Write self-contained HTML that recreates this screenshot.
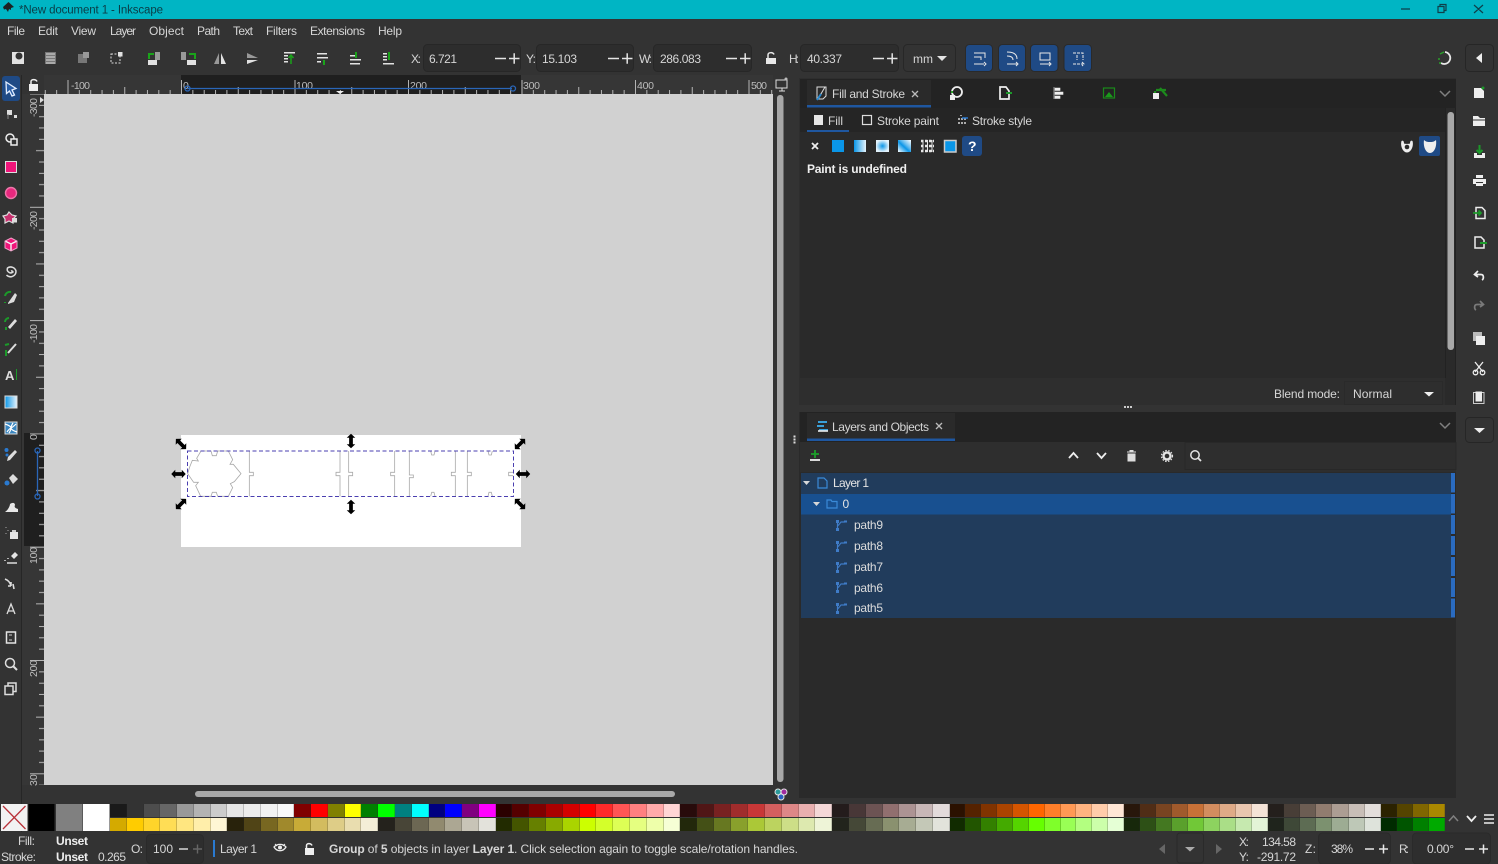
<!DOCTYPE html>
<html><head><meta charset="utf-8"><title>New document 1 - Inkscape</title>
<style>
html,body{margin:0;padding:0;width:1498px;height:864px;overflow:hidden;background:#333}
svg{position:absolute;left:0;top:0}
text{font-family:"Liberation Sans",sans-serif;font-size:12px;fill:#d6d6d6}
.b{font-weight:bold}
.s{font-size:10.5px;fill:#bdbdbd}
#pal{position:absolute;left:110px;top:804px;display:grid;grid-template-rows:13px 13px;row-gap:1px;grid-auto-flow:row;
grid-template-columns:repeat(23,16.766px) repeat(11,16.8px) repeat(9,16.88px) repeat(7,16.77px) repeat(11,15.87px) repeat(9,16px) repeat(7,16.1px) repeat(4,16px)}
#pal i{display:block;box-shadow:inset -1px 0 0 rgba(40,40,40,.22)}
</style></head><body>
<svg width="1498" height="864" viewBox="0 0 1498 864" xmlns="http://www.w3.org/2000/svg">
<defs>
<pattern id="tx" x="67.500" y="74" width="113.500" height="20" patternUnits="userSpaceOnUse">
<path d="M.5 6V20M11.85 16V20M23.2 16V20M34.55 16V20M45.9 16V20M57.25 13V20M68.6 16V20M79.95 16V20M91.3 16V20M102.65 16V20" stroke="#b5b5b5" fill="none"/></pattern>
<pattern id="ty" x="24" y="93.500" width="20" height="113.300" patternUnits="userSpaceOnUse">
<path d="M6 .5H20M15 11.8H20M15 23.2H20M15 34.5H20M15 45.8H20M12 57.2H20M15 68.5H20M15 79.8H20M15 91.1H20M15 102.5H20" stroke="#b5b5b5" fill="none"/></pattern>
<path id="h" d="M-8.500 0L-3.800 -5V-2.200H3.800V-5L8.500 0L3.800 5V2.200H-3.800V5Z" fill="#000"/>
<linearGradient id="g1" x1="0" x2="1"><stop offset="0" stop-color="#0a96e8"/><stop offset="1" stop-color="#e6f4fc"/></linearGradient>
<radialGradient id="g2"><stop offset="0" stop-color="#0a96e8"/><stop offset="1" stop-color="#e2f2fb"/></radialGradient>
<linearGradient id="g3" x1="0" y1="1" x2="1" y2="0"><stop offset="0" stop-color="#fff"/><stop offset=".45" stop-color="#0a96e8"/><stop offset=".6" stop-color="#5cb8ee"/><stop offset="1" stop-color="#fff"/></linearGradient>
<g id="pi"><path d="M1.500 3V11M1.500 7C3 6 4 4 5 3H9" stroke="#3f7cc8" stroke-width="1.200" fill="none"/><rect x="0" y="1" width="3" height="3" fill="#3f7cc8"/><rect x="0" y="9" width="3" height="3" fill="#3f7cc8"/><rect x="8" y="1.500" width="3" height="2" fill="#3f7cc8"/></g>
<g id="mp"><path d="M0 0H11M14 0H24.500M19.200 -5.200V5.200" stroke="#e4e4e4" stroke-width="1.500" fill="none"/></g>
</defs>

<!-- base -->
<rect width="1498" height="864" fill="#333"/>
<rect width="1498" height="19" fill="#00b5c4"/>
<path d="M3 7L8.500 2L14 7L11 8V10L9 9L8 12L6 9L4 9.500Z" fill="#1c2224"/>
<text x="19" y="13.500" textLength="144" style="font-size:11.500px;fill:#0a3c46">*New document 1 - Inkscape</text>
<path d="M1401 9H1410M1438 6.500V12.500H1444V6.500ZM1440 6.500V4.500H1446V10.500H1444M1474 5L1483 13M1483 5L1474 13" stroke="#0e3f4a" stroke-width="1.200" fill="none"/>

<!-- menu -->
<text x="7" y="35" textLength="18">File</text><text x="38" y="35" textLength="20">Edit</text><text x="71" y="35" textLength="25">View</text><text x="110" y="35" textLength="26">Layer</text><text x="149" y="35" textLength="35">Object</text><text x="197" y="35" textLength="23">Path</text><text x="233" y="35" textLength="20">Text</text><text x="266" y="35" textLength="31">Filters</text><text x="310" y="35" textLength="55">Extensions</text><text x="378" y="35" textLength="24">Help</text>

<!-- command toolbar icons -->
<g fill="#e2e2e2">
<rect x="12" y="52" width="12" height="12"/><circle cx="19" cy="56" r="3.500" fill="#333"/>
<rect x="45" y="52" width="11" height="12" fill="#777"/><path d="M46 54H55M46 57H55M46 60H55M46 63H55" stroke="#ddd" fill="none"/>
<rect x="78" y="54" width="9" height="9" fill="#777"/><rect x="83" y="52" width="6" height="6" fill="#999"/>
<path d="M111 54H120V63H111Z" fill="none" stroke="#ddd" stroke-dasharray="2 1.500"/><rect x="118" y="52" width="4.500" height="4.500"/>
<rect x="148" y="60" width="9" height="5"/><rect x="155" y="52" width="5" height="8" fill="#999"/><path d="M149 59V54H154" stroke="#1aa31a" stroke-width="2" fill="none"/>
<rect x="187" y="60" width="9" height="5"/><rect x="181" y="52" width="5" height="8" fill="#999"/><path d="M195 59V54H189" stroke="#1aa31a" stroke-width="2" fill="none"/>
<path d="M219 53L214 64H219Z" fill="#999"/><path d="M221 53L226 64H221Z"/>
<path d="M247 53L258 58L247 58Z" fill="#999"/><path d="M247 60L258 60L247 64Z"/>
<path d="M284 52H295V53.500H284ZM284 55H288V56.500H284ZM284 58H288V59.500H284ZM284 61H288V62.500H284Z"/><path d="M291 64V56M288.500 58L291 55L293.500 58" stroke="#1aa31a" stroke-width="1.500" fill="none"/>
<path d="M317 53H327V54.500H317ZM317 57H328V58.500H317ZM317 61H321V62.500H317Z"/><path d="M324 65V60" stroke="#1aa31a" stroke-width="2"/>
<path d="M350 55H355V56.500H350ZM350 59H361V60.500H350ZM350 63H360V64.500H350Z"/><path d="M356 52V58" stroke="#1aa31a" stroke-width="2"/>
<path d="M383 53H387V54.500H383ZM383 56H387V57.500H383ZM383 59H387V60.500H383ZM383 63H394V64.500H383Z"/><path d="M389 52V60" stroke="#1aa31a" stroke-width="2"/>
</g>

<!-- spin fields -->
<g fill="#2d2d2d" stroke="#272727">
<rect x="423.500" y="44.500" width="97" height="27" rx="4"/><rect x="536.500" y="44.500" width="97" height="27" rx="4"/><rect x="653.500" y="44.500" width="98" height="27" rx="4"/><rect x="800.500" y="44.500" width="98" height="27" rx="4"/><rect x="903.500" y="44.500" width="52" height="27" rx="4" fill="#333"/>
</g>
<text x="411" y="63" textLength="10">X:</text><text x="429" y="63" textLength="28">6.721</text>
<text x="526" y="63" textLength="10">Y:</text><text x="542" y="63" textLength="35">15.103</text>
<text x="639" y="63" textLength="13">W:</text><text x="660" y="63" textLength="41">286.083</text>
<text x="789" y="63" textLength="10">H:</text><text x="807" y="63" textLength="35">40.337</text>
<text x="913" y="63">mm</text><path d="M937 56H947L942 61Z" fill="#e4e4e4"/>
<use href="#mp" x="495" y="58.500"/><use href="#mp" x="608" y="58.500"/><use href="#mp" x="726" y="58.500"/><use href="#mp" x="873" y="58.500"/>
<rect x="766" y="58" width="10" height="6" fill="#e8e8e8"/><path d="M768 58V55C768 52 773 52 774 54.500" stroke="#e8e8e8" stroke-width="1.500" fill="none"/>

<!-- blue toggle buttons -->
<g fill="#1f4a85" stroke="#2a2a2a">
<rect x="965.500" y="44.500" width="27" height="27" rx="4"/><rect x="998.500" y="44.500" width="27" height="27" rx="4"/><rect x="1030.500" y="44.500" width="27.500" height="27" rx="4"/><rect x="1064" y="44.500" width="27.500" height="27" rx="4"/>
</g>
<g fill="none" stroke="#e8e8e8">
<path d="M974 53H985V58M974 57H981V60M974 64H984M984 62L986 64L984 66"/>
<path d="M1007 52C1013 52 1017 54 1017 59M1007 56C1010 56 1013 57 1013 60M1007 64H1017M1016 62L1018 64L1016 66"/>
<path d="M1040 53H1050V60H1040ZM1040 64H1050M1049 62L1051 64L1049 66"/>
<path d="M1073 53H1083V60M1077 55V60M1073 64H1083M1082 62L1084 64L1082 66" stroke-dasharray="3 1"/>
</g>
<path d="M1445 52A6 6 0 1 1 1441 63" stroke="#e8e8e8" stroke-width="1.800" fill="none"/><path d="M1444 52L1440 54M1439 58V60M1441 63H1439" stroke="#2aa02a" stroke-width="1.500"/>
<rect x="1465.500" y="44.500" width="28" height="27" rx="4" fill="#333" stroke="#262626"/><path d="M1482 53V63L1476 58Z" fill="#eee"/>

<!-- toolbox -->
<rect x="21" y="75" width="1" height="757" fill="#262626"/>
<rect x="2" y="76" width="18" height="25" rx="3" fill="#1f4a85"/>
<path d="M6 82L16 88.500L12 90L14.500 95L12 96L9.500 91L6.500 93.500Z" fill="#2a5fa8" stroke="#e4eeff" stroke-width="1.300"/>
<g>
<path d="M7 110H12V115H7ZM14 115H17V118H14ZM7 118H9" fill="#ddd"/><path d="M8 114V119" stroke="#888"/>
<circle cx="10" cy="138" r="4" fill="none" stroke="#eee" stroke-width="1.500"/><rect x="11" y="139" width="6" height="6" fill="#333" stroke="#eee" stroke-width="1.500"/>
<rect x="6" y="162" width="10" height="10" fill="#f0157a"/><rect x="5.500" y="161.500" width="11" height="11" fill="none" stroke="#ddd"/>
<circle cx="11" cy="193" r="5.500" fill="#e8287e" stroke="#e7a" stroke-width="1.400"/>
<path d="M9 212L12 215L16 216L13 219V223L9 221L5 223V219L3 216L7 215Z" fill="#c8306e" stroke="#ddd" stroke-width="1.200"/><rect x="12" y="218" width="5" height="4.500" fill="#ddd"/>
<path d="M11 238L17 241V248L11 251L5 248V241Z" fill="#f0157a"/><path d="M5 241L11 244L17 241M11 244V251" stroke="#f4f4f4" stroke-width="1.400" fill="none"/><path d="M11 238L17 241V248L11 251L5 248V241Z" fill="none" stroke="#f0a0c8"/>
<path d="M11 271A1.500 1.500 0 0 1 13 272A3.500 3.500 0 0 1 7.500 268A5.500 5.500 0 0 1 16 271A5.500 5.500 0 0 1 6.500 275" stroke="#ddd" stroke-width="1.500" fill="none"/>
<path d="M8 303L15 293L17 295L14 302L8 304Z" fill="#ddd"/><path d="M5 296A5 5 0 0 1 11 292M5 302V303" stroke="#1c9a2a" stroke-width="2" fill="none"/>
<path d="M8 327L15 319L17 321L10 329Z" fill="#ddd"/><path d="M5 322A4 4 0 0 1 9 318M6 330V327" stroke="#1c9a2a" stroke-width="2" fill="none"/>
<path d="M8 353L16 344" stroke="#ddd" stroke-width="2"/><path d="M6 356V350M5 345L9 344" stroke="#1c9a2a" stroke-width="2" fill="none"/>
</g>
<text x="5" y="380" class="b" style="font-size:13px;fill:#ddd">A</text><path d="M16.500 369V380" stroke="#1c9a2a"/>
<rect x="5" y="396" width="12" height="12" fill="url(#g1)" stroke="#ddd"/>
<rect x="5" y="422" width="12" height="12" fill="#3a86c0" stroke="#ddd"/><path d="M5 424Q11 426 11 428T9 433M17 432Q11 430 11 428T13 423M7 432Q9 429 11 428T16 424" stroke="#fff" fill="none" stroke-width="1.200"/>
<path d="M8 457L15 450L17 452L10 460L7 461Z" fill="#ddd"/><circle cx="6.500" cy="450" r="2" fill="#2a7ad0"/><circle cx="7" cy="455" r="1.500" fill="#2a7ad0"/>
<path d="M9 478L13 474L18 479L13 484Z" fill="#ddd"/><circle cx="7" cy="483" r="2.500" fill="#2a7ad0"/>
<path d="M5 512C8 510 10 506 10 504C13 502 15 503 15 505C14 507 15 508 18 509V512Z" fill="#e8e8e8"/>
<rect x="10" y="532" width="8" height="7" fill="#e4e4e4"/><path d="M12 530H16V532H12Z" fill="#ccc"/><path d="M6 527V528M8 530V531M6 533V534" stroke="#aaa"/>
<path d="M11 556L15 552L18 555L14 559Z" fill="#e4e4e4"/><path d="M7 563H17M5 560V561M8 558V559" stroke="#ddd" stroke-width="1.500"/>
<path d="M5 579Q10 581 11 586M11 586H8M11 586V582M13 584L14 589" stroke="#ddd" stroke-width="1.600" fill="none"/>
<path d="M7 614L11 604L15 614M8.500 611H13.500" stroke="#ddd" stroke-width="1.300" fill="none"/>
<path d="M6.500 632H15.500V643H6.500Z" fill="none" stroke="#e4e4e4" stroke-width="1.500"/><path d="M9 635H12M9 640H12" stroke="#ccc"/>
<circle cx="10" cy="663" r="4.500" fill="none" stroke="#ddd" stroke-width="1.500"/><path d="M13 666L17 670" stroke="#ddd" stroke-width="2"/>
<rect x="5" y="686" width="8" height="8.500" fill="#333" stroke="#ddd" stroke-width="1.500"/><path d="M8 686V683H16V691.500H13" fill="none" stroke="#ddd" stroke-width="1.500"/>

<!-- rulers -->
<rect x="44" y="75" width="729" height="19" fill="#363636"/>
<rect x="181" y="75" width="340" height="19" fill="#1f1f1f"/>
<rect x="44" y="74" width="729" height="20" fill="url(#tx)"/>
<rect x="22" y="94" width="22" height="691" fill="#363636"/>
<rect x="24" y="433" width="20" height="113" fill="#1f1f1f"/>
<rect x="24" y="94" width="20" height="691" fill="url(#ty)"/>
<text x="71" y="89" class="s" textLength="19">-100</text><text x="183" y="89" class="s">0</text><text x="296" y="89" class="s" textLength="17">100</text><text x="410" y="89" class="s" textLength="17">200</text><text x="523" y="89" class="s" textLength="17">300</text><text x="637" y="89" class="s" textLength="17">400</text><text x="751" y="89" class="s" textLength="16">500</text>
<text transform="translate(37 117) rotate(-90)" class="s" textLength="19">-300</text>
<text transform="translate(37 230) rotate(-90)" class="s" textLength="19">-200</text>
<text transform="translate(37 343) rotate(-90)" class="s" textLength="19">-100</text>
<text transform="translate(37 440) rotate(-90)" class="s">0</text>
<text transform="translate(37 564) rotate(-90)" class="s" textLength="17">100</text>
<text transform="translate(37 677) rotate(-90)" class="s" textLength="17">200</text>
<text transform="translate(37 786) rotate(-90)" class="s">30</text>
<path d="M187 88.500H512" stroke="#2a66b8" stroke-width="1.300"/><circle cx="187.500" cy="88.500" r="2.500" fill="none" stroke="#2a66b8" stroke-width="1.300"/><circle cx="513" cy="88.500" r="2.500" fill="none" stroke="#2a66b8" stroke-width="1.300"/>
<path d="M336 91H344L340 94Z" fill="#eee"/>
<path d="M37.500 451V496" stroke="#2a66b8" stroke-width="1.300"/><circle cx="37.500" cy="450.500" r="2.500" fill="none" stroke="#2a66b8" stroke-width="1.300"/><circle cx="37.500" cy="496.500" r="2.500" fill="none" stroke="#2a66b8" stroke-width="1.300"/>
<path d="M40 97V103L44 100Z" fill="#ddd"/>
<rect x="29" y="84" width="9" height="7" fill="#eee"/><path d="M31 84V81.500C31 79 36 79 37 81.500" stroke="#eee" stroke-width="1.500" fill="none"/>
<path d="M776 80H787V88H776ZM779 91H785M782 88V91" stroke="#ddd" fill="none"/><circle cx="786" cy="79" r="1.500" fill="#bbb"/>

<!-- canvas -->
<rect x="44" y="94" width="729" height="691" fill="#d1d1d1"/>
<rect x="181" y="435" width="340" height="112" fill="#fff"/>
<g transform="translate(165 425) scale(.33333)" fill="none" stroke="#a8a8a8" stroke-width="2.400">
<path d="M108 78L95 100L100 108L82 106L74 126L68 146L86 172L100 172L92 182L107 214H138L142 202H154L158 214H190L203 188L196 176L208 170L228 146L205 118L195 118L203 104L190 78H158L154 92H142L138 78Z"/>
<path d="M253 78V142H265V152H253V214M525 78V142H513V152H525V214M551 78V142H563V152H551V214M689 78V142H677V152H689V214M733 78V150H745V158H733V214M871 78V142H859V152H871V214M907 78V142H919V152H907V214M1045 142H1031V152H1045"/>
<path d="M797 78L800 90H807L810 78M797 214L800 202H807L810 214M969 78L972 90H979L982 78M969 214L972 202H979L982 214"/>
</g>
<rect x="187.500" y="451" width="326" height="45.500" fill="none" stroke="#4a3fb0" stroke-width="1" stroke-dasharray="4 2.500"/>
<use href="#h" transform="translate(181 444) rotate(45) scale(.85)"/><use href="#h" transform="translate(520 444) rotate(-45) scale(.85)"/><use href="#h" transform="translate(181 504) rotate(-45) scale(.85)"/><use href="#h" transform="translate(520 504) rotate(45) scale(.85)"/>
<use href="#h" transform="translate(351 441) rotate(90) scale(.85)"/><use href="#h" transform="translate(351 507) rotate(90) scale(.85)"/><use href="#h" transform="translate(178.500 474) scale(.85)"/><use href="#h" transform="translate(523 474) scale(.85)"/>

<!-- scrollbars -->
<rect x="777" y="95" width="6.500" height="687" rx="3" fill="#a8a8a8"/>
<rect x="195" y="791" width="480" height="6" rx="3" fill="#a8a8a8"/>
<circle cx="778" cy="792" r="3" fill="#2a9a9a" stroke="#e4e4e4"/><circle cx="784" cy="792" r="3" fill="#a02aa0" stroke="#e4e4e4"/><circle cx="781" cy="797" r="3" fill="#2a60c0" stroke="#e4e4e4"/>
<path d="M794.500 435.500V443.500" stroke="#ddd" stroke-width="2" stroke-dasharray="2 1"/>

<!-- fill stroke panel -->
<rect x="799" y="78" width="657" height="327" fill="#2e2e2e"/>
<rect x="800" y="79" width="656" height="29" fill="#232323"/>
<rect x="807" y="80" width="124" height="25" fill="#2a2a2a"/>
<rect x="807" y="105" width="124" height="2.500" fill="#1f57a0"/>
<path d="M817 87H826V96L823 99H817ZM825 87L818 99" stroke="#ddd" fill="none"/><path d="M821 94L817 100" stroke="#2a8ad0" stroke-width="2"/>
<text x="832" y="98" textLength="73">Fill and Stroke</text>
<path d="M912 91L918 97M918 91L912 97" stroke="#bbb" stroke-width="1.300"/>
<circle cx="957" cy="92" r="5" fill="none" stroke="#eee" stroke-width="1.800"/><path d="M951 92H953" stroke="#2aa02a" stroke-width="2"/><rect x="950" y="95" width="5" height="5" fill="#eee"/>
<path d="M1000 87H1006L1009 91V99H1000Z" fill="#232323" stroke="#eee" stroke-width="1.700"/><path d="M1006 93H1012" stroke="#1c9a2a" stroke-width="2"/>
<path d="M1054 87V99M1055 88H1060V90.500H1055ZM1055 92H1063V94.500H1055ZM1055 96H1060V98.500H1055Z" fill="#eee" stroke="#eee" stroke-width=".6"/>
<rect x="1103.500" y="88" width="11" height="10" fill="none" stroke="#1a8a1a" stroke-width="1.200"/><path d="M1105 97L1109 92L1113 97Z" fill="#1a9a1a"/>
<path d="M1155 91V98M1160 88L1167 96M1156 90L1166 90" stroke="#1c8a1c" stroke-width="2.200" fill="none"/><rect x="1153" y="93" width="6" height="6" fill="#eee"/>
<path d="M1440 91L1445 96L1450 91" stroke="#808080" stroke-width="1.500" fill="none"/>
<!-- subtabs -->
<rect x="800" y="108" width="645" height="24" fill="#252525"/>
<rect x="807" y="130" width="42" height="2" fill="#1f57a0"/>
<rect x="814" y="115" width="9" height="10" fill="#e6e6e6"/>
<text x="828" y="125" textLength="15">Fill</text>
<rect x="862.500" y="115.500" width="9" height="9" fill="none" stroke="#ddd" stroke-width="1.200"/>
<text x="877" y="125" textLength="62">Stroke paint</text>
<path d="M958 123H967M958 119H963M964 119H967M961 115V116" stroke="#d8d8d8" stroke-dasharray="2 1" stroke-width="1.400"/><path d="M962 118H968" stroke="#2a7ad0" stroke-width="1.500"/>
<text x="972" y="125" textLength="60">Stroke style</text>
<rect x="800" y="132" width="645" height="246" fill="#2a2a2a"/>
<path d="M812 143L818 149M818 143L812 149" stroke="#eee" stroke-width="1.800"/>
<rect x="832" y="140" width="12" height="12" fill="#0a96e8"/>
<rect x="854" y="140" width="12" height="12" fill="url(#g1)"/>
<rect x="876" y="140" width="13" height="12" fill="url(#g2)"/>
<rect x="898" y="140" width="13" height="12" fill="url(#g3)"/>
<path d="M921 141H934M921 146H934M921 151H934" stroke="#e6e6e6" stroke-width="2.400" stroke-dasharray="2.500 1.500"/><path d="M927.500 140V152M923 140V152M932 140V152" stroke="#e6e6e6" stroke-width="1"/>
<rect x="944.500" y="140.500" width="11.500" height="11.500" fill="#0a96e8" stroke="#ccc" stroke-width="1.500"/>
<rect x="962" y="136" width="20" height="20" rx="3" fill="#1f4a85"/>
<text x="968" y="151" class="b" style="font-size:14px;fill:#fff">?</text>
<text x="807" y="173" class="b" textLength="100" style="fill:#eee">Paint is undefined</text>
<path d="M1401.500 141C1403 140 1404 141 1404 143.500C1404 144 1410 144 1410 143.500C1410 141 1411 140 1412.500 141C1414 146 1411 152.500 1407 152.500C1403 152.500 1400 146 1401.500 141Z" fill="#eee"/><circle cx="1407" cy="147" r="2.300" fill="#2a2a2a"/>
<rect x="1419" y="136" width="21" height="20" rx="2" fill="#1f4a85"/>
<path d="M1424 140C1426 142 1428 142 1430 142C1432 142 1434 142 1436 140C1437 147 1434 153 1430 153C1426 153 1423 147 1424 140Z" fill="#eee"/>
<rect x="1445" y="108" width="11" height="297" fill="#2a2a2a"/><path d="M1445.500 108V378M1455.500 108V405" stroke="#222"/>
<rect x="1447.500" y="112" width="6.500" height="238" rx="3" fill="#a8a8a8"/>
<text x="1274" y="398" textLength="66">Blend mode:</text><text x="1353" y="398" textLength="39">Normal</text>
<path d="M1424 392H1434L1429 396.500Z" fill="#eee"/>
<rect x="1344.500" y="381.500" width="98" height="23" fill="none" stroke="#2a2a2a"/>
<path d="M1124 407H1126M1127 407H1129M1130 407H1132" stroke="#ccc" stroke-width="2"/>

<!-- layers panel -->
<rect x="799" y="412" width="657" height="386" fill="#2a2a2a"/>
<rect x="800" y="412" width="656" height="30" fill="#232323"/>
<rect x="807" y="413" width="148" height="26" fill="#2a2a2a"/>
<rect x="807" y="438.500" width="148" height="2.500" fill="#1f57a0"/>
<path d="M818 422H827M817 426H824M819 430H828" stroke="#3aa0d8" stroke-width="2"/><path d="M818 431H828" stroke="#eee" stroke-width="1.600"/>
<text x="832" y="431" textLength="97">Layers and Objects</text>
<path d="M936 423L942 429M942 423L936 429" stroke="#bbb" stroke-width="1.300"/>
<path d="M1440 423L1445 428L1450 423" stroke="#808080" stroke-width="1.500" fill="none"/>
<rect x="800" y="442" width="656" height="30" fill="#2e2e2e"/>
<path d="M815 450V458M811 454H819" stroke="#1ca02a" stroke-width="1.800"/><path d="M810 460H820" stroke="#eee" stroke-width="1.800"/>
<path d="M1069 458L1073.500 453L1078 458M1097 453L1101.500 458L1106 453" stroke="#eee" stroke-width="1.800" fill="none"/>
<path d="M1127 452H1136M1130 452V450.500H1133V452M1128 454H1135V461H1128Z" fill="#ddd" stroke="#ddd"/>
<circle cx="1167" cy="456" r="3.500" fill="#2e2e2e" stroke="#e4e4e4" stroke-width="2.400"/><circle cx="1167" cy="456" r="5.500" fill="none" stroke="#e4e4e4" stroke-width="1.200" stroke-dasharray="1.500 1.500"/>
<circle cx="1195" cy="455" r="4.200" fill="none" stroke="#e4e4e4" stroke-width="1.500"/><path d="M1198 458L1201 461" stroke="#e4e4e4" stroke-width="1.800"/>
<rect x="1185" y="442.500" width="271" height="27" fill="none" stroke="#282828"/>
<!-- rows -->
<rect x="801" y="473" width="650" height="145" fill="#213c5c"/>
<rect x="801" y="494" width="650" height="20.500" fill="#185090"/>
<path d="M1451 473H1455V492.500H1451ZM1451 494H1455V513.500H1451ZM1451 515H1455V534H1451ZM1451 536H1455V555H1451ZM1451 557H1455V576H1451ZM1451 578H1455V597H1451ZM1451 598.500H1455V617.500H1451Z" fill="#2a6bc0"/>
<path d="M803 481H810L806.500 485ZM813 502H820L816.500 506Z" fill="#d8d8d8"/>
<path d="M818 478H824L827 481V488H818Z" fill="none" stroke="#3a8ad8" stroke-width="1.200"/>
<path d="M827 500H831L832 501.500H837V508H827Z" fill="none" stroke="#3a8ad8" stroke-width="1.200"/>
<use href="#pi" x="836" y="519"/><use href="#pi" x="836" y="540"/><use href="#pi" x="836" y="561"/><use href="#pi" x="836" y="581"/><use href="#pi" x="836" y="602"/>
<text x="833" y="487" textLength="36" style="fill:#e4e4e4">Layer 1</text><text x="842.500" y="508" style="fill:#e4e4e4">0</text>
<text x="854" y="529" textLength="29" style="fill:#dcdcdc">path9</text><text x="854" y="550" textLength="29" style="fill:#dcdcdc">path8</text><text x="854" y="571" textLength="29" style="fill:#dcdcdc">path7</text><text x="854" y="592" textLength="29" style="fill:#dcdcdc">path6</text><text x="854" y="612" textLength="29" style="fill:#dcdcdc">path5</text>

<!-- right command bar -->
<g>
<path d="M1474 88H1481L1484 91V98H1474Z" fill="#eee"/><circle cx="1483" cy="88" r="1.500" fill="#1c9a2a"/>
<path d="M1473 116H1478L1480 118H1485V126H1473Z" fill="#eee"/><path d="M1473 120H1485" stroke="#333"/>
<path d="M1474 153V158H1485V153H1482V155H1477V153Z" fill="#eee"/><path d="M1479.500 145V153M1476.500 150L1479.500 153L1482.500 150" stroke="#1c9a2a" stroke-width="2" fill="none"/>
<path d="M1476 175H1483V178H1476ZM1473 179H1486V184H1483V182H1476V184H1473ZM1476 183H1483V186H1476Z" fill="#eee"/>
<path d="M1476 207.500H1482L1485 210.500V218.500H1476Z" fill="#333" stroke="#eee" stroke-width="1.500"/><path d="M1473 213H1481M1478.500 210.500L1481 213L1478.500 215.500" stroke="#1c9a2a" stroke-width="1.800" fill="none"/>
<path d="M1475 237H1481L1484 240V248H1475Z" fill="#333" stroke="#eee" stroke-width="1.500"/><path d="M1480 243H1487" stroke="#1c9a2a" stroke-width="2"/>
<path d="M1478 271L1474.500 274.500L1478 277M1475 274.500H1481C1484 274.500 1484 279 1482 280" stroke="#eee" stroke-width="1.700" fill="none"/>
<path d="M1480 301L1483.500 304.500L1480 307M1483 304.500H1477C1474 304.500 1474 309 1476 310" stroke="#7a7a7a" stroke-width="1.700" fill="none"/>
<rect x="1473" y="332" width="9" height="9" fill="#bbb"/><rect x="1476" y="336" width="9" height="9" fill="#eee"/>
<path d="M1475 362L1483 372M1483 362L1475 372" stroke="#eee" stroke-width="1.300"/><circle cx="1475.500" cy="372.500" r="2.300" fill="none" stroke="#eee" stroke-width="1.300"/><circle cx="1482.500" cy="372.500" r="2.300" fill="none" stroke="#eee" stroke-width="1.300"/>
<rect x="1473.500" y="392.500" width="10.500" height="11" fill="none" stroke="#ccc"/><rect x="1475.500" y="391.500" width="6.500" height="10" fill="#eee"/>
<rect x="1465.500" y="417.500" width="28" height="25" rx="4" fill="#333" stroke="#262626"/><path d="M1474 428H1485L1479.500 433Z" fill="#eee"/>
</g>

<!-- palette X swatch etc -->
<rect x="1" y="804" width="26.500" height="27" fill="#f2f2f2"/><path d="M3 806L25.500 829M25.500 806L3 829" stroke="#b8323a" stroke-width="1.300"/>
<rect x="28.500" y="804" width="26" height="27" fill="#000"/><rect x="56" y="804" width="26.500" height="27" fill="#808080"/><rect x="83" y="804" width="26.500" height="27" fill="#fff"/>
<path d="M1449 821L1453.500 816L1458 821" stroke="#808080" stroke-width="1.500" fill="none"/><path d="M1467 816L1471.500 821L1476 816" stroke="#eee" stroke-width="1.800" fill="none"/>
<path d="M1484 815H1494M1484 819H1494M1484 823H1494" stroke="#eee" stroke-width="1.500"/>

<!-- status -->
<text x="18" y="845" textLength="17">Fill:</text><text x="1" y="861" textLength="35">Stroke:</text>
<text x="56" y="845" class="b" textLength="32" style="fill:#eee">Unset</text><text x="56" y="861" class="b" textLength="32" style="fill:#eee">Unset</text>
<text x="98" y="861" textLength="28">0.265</text>
<text x="131" y="853" textLength="12">O:</text>
<rect x="146.500" y="834.500" width="57" height="29" rx="4" fill="#2e2e2e" stroke="#2a2a2a"/>
<text x="153" y="853" textLength="20">100</text>
<path d="M179 849H188" stroke="#e4e4e4" stroke-width="1.400"/><path d="M193 849H202M197.500 844.500V853.500" stroke="#666" stroke-width="1.400"/>
<rect x="213" y="840" width="2" height="17" fill="#2a7ad0"/>
<text x="220" y="853" textLength="37">Layer 1</text>
<path d="M274 847C277 843.500 283 843.500 286 847C283 852 277 852 274 847Z" fill="none" stroke="#eee" stroke-width="1.300"/><circle cx="280" cy="847.500" r="2" fill="#eee"/><path d="M275 844L277 846M285 844L283 846" stroke="#eee"/>
<rect x="305" y="848" width="9" height="7" fill="#eee"/><path d="M306.500 848V845.500C306.500 843 311 843 312 845.500" stroke="#eee" stroke-width="1.500" fill="none"/>
<text x="329" y="853" textLength="469"><tspan class="b">Group</tspan> of <tspan class="b">5</tspan> objects in layer <tspan class="b">Layer 1</tspan>. Click selection again to toggle scale/rotation handles.</text>
<path d="M1165 844V854L1159 849Z" fill="#666"/><rect x="1177" y="833" width="26.500" height="30" rx="3" fill="#333" stroke="#2a2a2a"/><path d="M1185 847H1195L1190 851.500Z" fill="#aaa"/><path d="M1216 844V854L1222 849Z" fill="#666"/>
<text x="1239" y="846" textLength="10">X:</text><text x="1262" y="846" textLength="34">134.58</text>
<text x="1239" y="861" textLength="10">Y:</text><text x="1257" y="861" textLength="39">-291.72</text>
<text x="1305" y="853" textLength="11">Z:</text>
<rect x="1318.500" y="833" width="72" height="31" rx="4" fill="#2e2e2e" stroke="#2a2a2a"/>
<text x="1331" y="853" textLength="22">38%</text>
<path d="M1365 849H1374M1379 849H1388M1383.500 844.500V853.500" stroke="#e8e8e8" stroke-width="1.500"/>
<text x="1399" y="853" textLength="10">R:</text>
<rect x="1412.500" y="833" width="78" height="31" rx="4" fill="#2e2e2e" stroke="#2a2a2a"/>
<text x="1427" y="853" textLength="27">0.00°</text>
<path d="M1465 849H1474M1479 849H1488M1483.500 844.500V853.500" stroke="#e8e8e8" stroke-width="1.500"/>
</svg>
<div id="pal">
<i style="background:#1a1a1a"></i><i style="background:#333"></i><i style="background:#4d4d4d"></i><i style="background:#666"></i><i style="background:#999"></i><i style="background:#b3b3b3"></i><i style="background:#ccc"></i><i style="background:#e6e6e6"></i><i style="background:#ececec"></i><i style="background:#f2f2f2"></i><i style="background:#f9f9f9"></i><i style="background:#800000"></i><i style="background:#f00"></i><i style="background:#808000"></i><i style="background:#ff0"></i><i style="background:#008000"></i><i style="background:#0f0"></i><i style="background:#008080"></i><i style="background:#0ff"></i><i style="background:#000080"></i><i style="background:#00f"></i><i style="background:#800080"></i><i style="background:#f0f"></i>
<i style="background:#2b0000"></i><i style="background:#550000"></i><i style="background:#800000"></i><i style="background:#a00"></i><i style="background:#d40000"></i><i style="background:#f00"></i><i style="background:#ff2a2a"></i><i style="background:#f55"></i><i style="background:#ff8080"></i><i style="background:#faa"></i><i style="background:#ffd5d5"></i>
<i style="background:#280b0b"></i><i style="background:#501616"></i><i style="background:#782121"></i><i style="background:#a02c2c"></i><i style="background:#c83737"></i><i style="background:#d35f5f"></i><i style="background:#de8787"></i><i style="background:#e9afaf"></i><i style="background:#f4d7d7"></i>
<i style="background:#241c1c"></i><i style="background:#483737"></i><i style="background:#6c5353"></i><i style="background:#916f6f"></i><i style="background:#ac9393"></i><i style="background:#c8b7b7"></i><i style="background:#e3dbdb"></i>
<i style="background:#2b1100"></i><i style="background:#520"></i><i style="background:#803300"></i><i style="background:#a40"></i><i style="background:#d45500"></i><i style="background:#f60"></i><i style="background:#ff7f2a"></i><i style="background:#f95"></i><i style="background:#ffb380"></i><i style="background:#fca"></i><i style="background:#ffe6d5"></i>
<i style="background:#28170b"></i><i style="background:#502d16"></i><i style="background:#784421"></i><i style="background:#a05a2c"></i><i style="background:#c87137"></i><i style="background:#d38d5f"></i><i style="background:#deaa87"></i><i style="background:#e9c6af"></i><i style="background:#f4e3d7"></i>
<i style="background:#241f1c"></i><i style="background:#483e37"></i><i style="background:#6c5d53"></i><i style="background:#917c6f"></i><i style="background:#ac9d93"></i><i style="background:#c8beb7"></i><i style="background:#e3dedb"></i>
<i style="background:#2b2200"></i><i style="background:#540"></i><i style="background:#806600"></i><i style="background:#a80"></i>

<i style="background:#d4aa00"></i><i style="background:#fc0"></i><i style="background:#ffd42a"></i><i style="background:#fd5"></i><i style="background:#ffe680"></i><i style="background:#fea"></i><i style="background:#fff6d5"></i>
<i style="background:#28220b"></i><i style="background:#504416"></i><i style="background:#786721"></i><i style="background:#a0892c"></i><i style="background:#c8ab37"></i><i style="background:#d3bc5f"></i><i style="background:#decd87"></i><i style="background:#e9ddaf"></i><i style="background:#f4eed7"></i>
<i style="background:#24221c"></i><i style="background:#484537"></i><i style="background:#6c6753"></i><i style="background:#918a6f"></i><i style="background:#aca793"></i><i style="background:#c8c4b7"></i><i style="background:#e3e2db"></i>
<i style="background:#222b00"></i><i style="background:#450"></i><i style="background:#668000"></i><i style="background:#8a0"></i><i style="background:#aad400"></i><i style="background:#cf0"></i><i style="background:#d4ff2a"></i><i style="background:#df5"></i><i style="background:#e5ff80"></i><i style="background:#efa"></i><i style="background:#f6ffd5"></i>
<i style="background:#22280b"></i><i style="background:#445016"></i><i style="background:#677821"></i><i style="background:#89a02c"></i><i style="background:#abc837"></i><i style="background:#bcd35f"></i><i style="background:#cdde87"></i><i style="background:#dde9af"></i><i style="background:#eef4d7"></i>
<i style="background:#22241c"></i><i style="background:#454837"></i><i style="background:#676c53"></i><i style="background:#8a916f"></i><i style="background:#a7ac93"></i><i style="background:#c4c8b7"></i><i style="background:#e2e3db"></i>
<i style="background:#112b00"></i><i style="background:#250"></i><i style="background:#338000"></i><i style="background:#4a0"></i><i style="background:#55d400"></i><i style="background:#6f0"></i><i style="background:#7fff2a"></i><i style="background:#9f5"></i><i style="background:#b3ff80"></i><i style="background:#cfa"></i><i style="background:#e5ffd5"></i>
<i style="background:#17280b"></i><i style="background:#2d5016"></i><i style="background:#447821"></i><i style="background:#5aa02c"></i><i style="background:#71c837"></i><i style="background:#8dd35f"></i><i style="background:#aade87"></i><i style="background:#c6e9af"></i><i style="background:#e3f4d7"></i>
<i style="background:#1f241c"></i><i style="background:#3e4837"></i><i style="background:#5d6c53"></i><i style="background:#7c916f"></i><i style="background:#9dac93"></i><i style="background:#bec8b7"></i><i style="background:#dee3db"></i>
<i style="background:#002b00"></i><i style="background:#050"></i><i style="background:#008000"></i><i style="background:#0a0"></i>
</div>
</body></html>
